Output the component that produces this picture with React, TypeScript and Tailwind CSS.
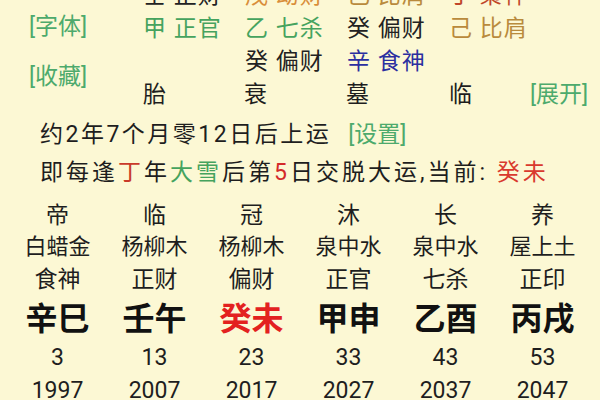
const topRows = [
  [
    { g: "壬", s: "正财", c: "text-[#222222]" },
    { g: "戊", s: "劫财", c: "text-[#d98e3a]" },
    { g: "己", s: "比肩", c: "text-[#b98a3c]" },
    { g: "丁", s: "枭神", c: "text-[#c0462a]" },
  ],
  [
    { g: "甲", s: "正官", c: "text-[#45a35e]" },
    { g: "乙", s: "七杀", c: "text-[#45a35e]" },
    { g: "癸", s: "偏财", c: "text-[#222222]" },
    { g: "己", s: "比肩", c: "text-[#b98a3c]" },
  ],
  [
    { g: "", s: "", c: "" },
    { g: "癸", s: "偏财", c: "text-[#222222]" },
    { g: "辛", s: "食神", c: "text-[#2b2fa0]" },
  ],
];

const luck = [
  { stage: "帝", nayin: "白蜡金", god: "食神", gz: "辛巳", age: "3", year: "1997" },
  { stage: "临", nayin: "杨柳木", god: "正财", gz: "壬午", age: "13", year: "2007" },
  { stage: "冠", nayin: "杨柳木", god: "偏财", gz: "癸未", age: "23", year: "2017", current: true },
  { stage: "沐", nayin: "泉中水", god: "正官", gz: "甲申", age: "33", year: "2027" },
  { stage: "长", nayin: "泉中水", god: "七杀", gz: "乙酉", age: "43", year: "2037" },
  { stage: "养", nayin: "屋上土", god: "正印", gz: "丙戌", age: "53", year: "2047" },
];

export default function App() {
  return (
    <div className="w-[600px] h-[400px] overflow-hidden bg-[#fcf8d4] text-[#1e1e1e] font-['Roboto','Noto_Sans_CJK_SC',sans-serif]">
      {/* hidden stems block, scrolled partly off the top */}
      <div className="flex -mt-[21px] text-[23px] leading-none">
        <div className="w-[143px] pl-[29px] flex flex-col pt-[33px] text-[#4daa6c]">
          <div className="h-[28px] flex items-center">[字体]</div>
          <div className="h-[28px] mt-[22px] flex items-center">[收藏]</div>
        </div>
        <div className="flex flex-col">
          {topRows.map((row, i) => (
            <div key={i} className="h-[33px] flex items-center">
              {row.map((cell, j) => (
                <div key={j} className={`w-[102px] whitespace-pre tracking-[1px] ${cell.c}`}>
                  {cell.g ? `${cell.g} ${cell.s}` : ""}
                </div>
              ))}
            </div>
          ))}
          <div className="h-[33px] flex items-center">
            <div className="w-[101px]">胎</div>
            <div className="w-[102px]">衰</div>
            <div className="w-[103px]">墓</div>
            <div className="w-[81px]">临</div>
            <div className="text-[#4daa6c]">[展开]</div>
          </div>
        </div>
      </div>

      {/* start of luck */}
      <div className="pl-[40px] mt-[2px] text-[23px] leading-none">
        <div className="h-[40px] pt-[3px] flex items-center">
          <span className="tracking-[2.5px]">约2年7个月零12日后上运</span>
          <span className="ml-[17px] text-[#4daa6c]">[设置]</span>
        </div>
        <div className="h-[39px] flex items-center">
          <span className="tracking-[3px]">
            即每逢<span className="text-[#c93a2a]">丁</span>年
            <span className="text-[#45a35e]">大雪</span>后第
            <span className="text-[#d42a2a]">5</span>日交脱大运,当前:{" "}
            <span className="text-[#d93a2e]">癸未</span>
          </span>
        </div>
      </div>

      {/* ten-year pillars */}
      <div className="grid grid-cols-6 px-[9px] mt-[7px] text-center leading-none">
        {luck.map((p) => (
          <div key={p.year} className="flex flex-col items-center">
            <div className="h-[32px] flex items-center text-[23px]">{p.stage}</div>
            <div className="h-[32px] flex items-center text-[22px]">{p.nayin}</div>
            <div className="h-[32px] flex items-center text-[23px]">{p.god}</div>
            <div
              className={`h-[48px] flex items-center text-[32px] font-bold ${
                p.current ? "text-[#e3211f]" : "text-[#111111]"
              }`}
            >
              {p.gz}
            </div>
            <div className="h-[28px] flex items-center text-[23px]">{p.age}</div>
            <div className="h-[38px] flex items-center text-[23px]">{p.year}</div>
          </div>
        ))}
      </div>
    </div>
  );
}
